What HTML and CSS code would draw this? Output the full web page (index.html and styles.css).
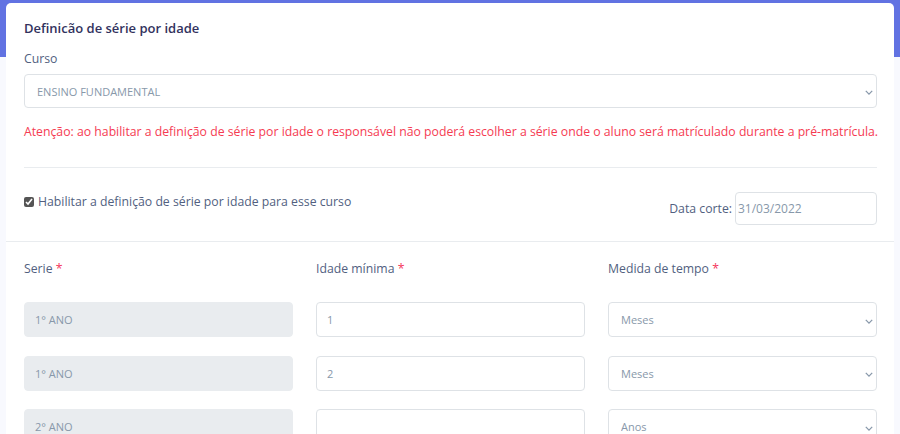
FILE: index.html
```html
<html lang="pt">

<head>
    <title>Definição de série por idade</title>
    <meta name="viewport" content="width=device-width, initial-scale=1">
    <link rel="stylesheet" href="styles.css">
</head>

<body>
    <div class="card">
        <div class="card-body">
            <h3 class="card-title">Definicão de série por idade</h3>

            <label class="form-label">Curso</label>
            <div class="select-wrap">
                <select class="form-control select-course">
                    <option>ENSINO FUNDAMENTAL</option>
                </select>
                <svg class="chevron" viewBox="0 0 10 6" width="8" height="5"><path d="M1 1l4 4 4-4" fill="none" stroke="#8898aa" stroke-width="1.6"/></svg>
            </div>

            <p class="warning">Atenção: ao habilitar a definição de série por idade o responsável não poderá escolher a série onde o aluno será matrículado durante a pré-matrícula.</p>

            <hr class="divider">

            <div class="options-row">
                <label class="check-label">
                    <input type="checkbox" checked>
                    Habilitar a definição de série por idade para esse curso
                </label>
                <div class="date-group">
                    <span class="date-label">Data corte:</span>
                    <input type="text" class="date-input" value="31/03/2022">
                </div>
            </div>
        </div>

        <div class="card-body series">
            <div class="series-grid">
                <div class="col-head">Serie <span class="req">*</span></div>
                <div class="col-head">Idade mínima <span class="req">*</span></div>
                <div class="col-head">Medida de tempo <span class="req">*</span></div>

                <input type="text" class="form-control field" value="1° ANO" disabled>
                <input type="text" class="form-control field" value="1">
                <div class="select-wrap">
                    <select class="form-control field select-field"><option>Meses</option></select>
                    <svg class="chevron" viewBox="0 0 10 6" width="8" height="5"><path d="M1 1l4 4 4-4" fill="none" stroke="#8898aa" stroke-width="1.6"/></svg>
                </div>

                <input type="text" class="form-control field" value="1° ANO" disabled>
                <input type="text" class="form-control field" value="2">
                <div class="select-wrap">
                    <select class="form-control field select-field"><option>Meses</option></select>
                    <svg class="chevron" viewBox="0 0 10 6" width="8" height="5"><path d="M1 1l4 4 4-4" fill="none" stroke="#8898aa" stroke-width="1.6"/></svg>
                </div>

                <input type="text" class="form-control field" value="2° ANO" disabled>
                <input type="text" class="form-control field" value="">
                <div class="select-wrap">
                    <select class="form-control field select-field"><option>Anos</option></select>
                    <svg class="chevron" viewBox="0 0 10 6" width="8" height="5"><path d="M1 1l4 4 4-4" fill="none" stroke="#8898aa" stroke-width="1.6"/></svg>
                </div>
            </div>
        </div>
    </div>
</body>

</html>
```

FILE: styles.css
```css
body {
    margin: 0;
    font-family: "Open Sans", "Liberation Sans", sans-serif;
    background: linear-gradient(#6172e2 0, #6172e2 57px, #f8f9fe 57px);
    min-height: 434px;
    overflow: hidden;
}

.card {
    margin: 3px 6px 0 6px;
    background: #fff;
    border-radius: 5px 5px 0 0;
    min-height: 460px;
}

.card-body {
    padding: 15px 17px 16px 18px;
}

.card-title {
    margin: 0;
    font-size: 13px;
    font-weight: 600;
    line-height: 20px;
    color: #32325d;
}

.form-label {
    display: block;
    margin-top: 11px;
    font-size: 12.25px;
    line-height: 20px;
    color: #525f7f;
}

.form-control {
    box-sizing: border-box;
    width: 100%;
    border: 1px solid #dee2e6;
    border-radius: 4px;
    background: #fff;
    font-family: "Open Sans", "Liberation Sans", sans-serif;
    font-size: 11px;
    color: #8898aa;
    outline: none;
}

.select-wrap {
    position: relative;
}

select.form-control {
    -webkit-appearance: none;
    appearance: none;
    padding: 0 12px;
}

.select-course {
    margin-top: 5px;
    height: 34px;
}

.chevron {
    position: absolute;
    right: 4px;
    top: 50%;
    margin-top: -1px;
}

.select-wrap .select-course + .chevron {
    margin-top: 1px;
}

.warning {
    margin: 14px 0 0;
    font-size: 12.25px;
    line-height: 20px;
    color: #f53b52;
    white-space: nowrap;
}

.divider {
    margin: 25px 0 23px;
    border: 0;
    border-top: 1px solid #e9ecef;
}

.options-row {
    display: flex;
    justify-content: space-between;
    align-items: flex-start;
}

.check-label {
    font-size: 12.25px;
    line-height: 20px;
    color: #525f7f;
    display: flex;
    align-items: center;
    padding-top: 1px;
}

.check-label input {
    width: 10px;
    height: 10px;
    margin: 0 4px 0 0;
    accent-color: #555;
}

.date-group {
    display: flex;
    align-items: center;
    margin-top: 1px;
}

.date-label {
    font-size: 12.25px;
    color: #525f7f;
    margin-right: 3px;
}

.date-input {
    box-sizing: border-box;
    width: 142px;
    height: 33px;
    border: 1px solid #dee2e6;
    border-radius: 4px;
    padding: 0 2px;
    font-family: "Open Sans", "Liberation Sans", sans-serif;
    font-size: 12px;
    color: #8898aa;
    outline: none;
}

.series {
    border-top: 1px solid #e9ecef;
    padding-top: 17px;
}

.series-grid {
    display: grid;
    grid-template-columns: 1fr 1fr 1fr;
    column-gap: 23px;
    row-gap: 18.5px;
}

.col-head {
    font-size: 12.25px;
    line-height: 20px;
    color: #525f7f;
    margin-bottom: 4.5px;
}

.req {
    color: #f5365c;
}

.field {
    height: 35px;
    padding: 0 10px;
}

.field:disabled {
    background: #e9ecef;
    border-color: #e9ecef;
    color: #8898aa;
}

.select-field {
    padding: 0 13px;
}
```
